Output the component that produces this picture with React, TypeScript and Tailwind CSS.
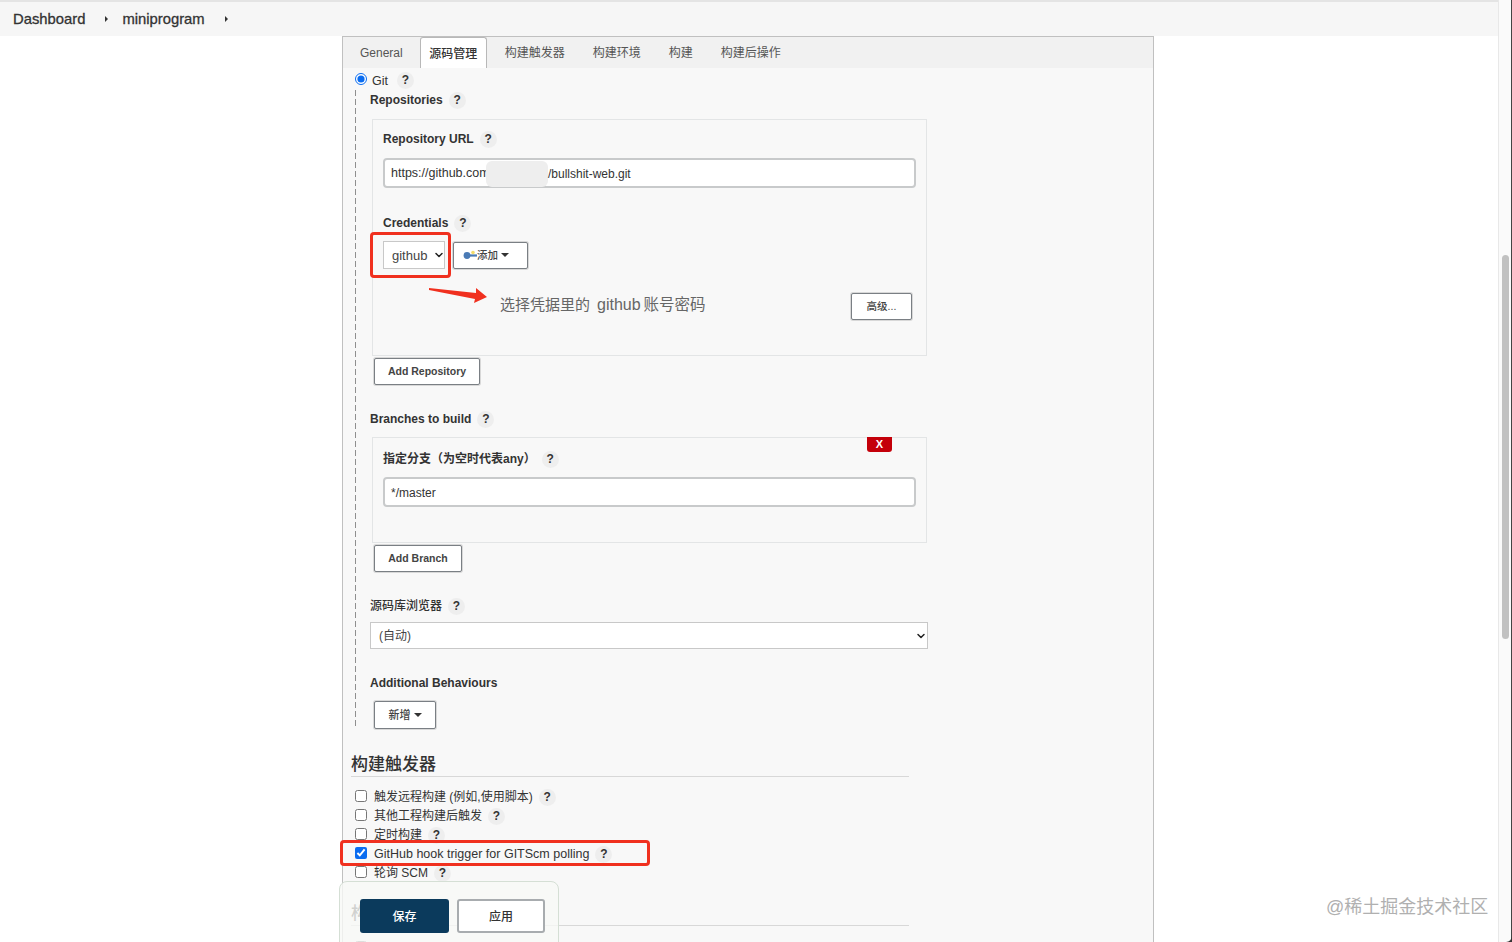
import { ChevronDown } from 'lucide-react';

const font = 'font-["Liberation_Sans","Noto_Sans_CJK_SC",sans-serif]';

function Help() {
  return (
    <span className="ml-[6px] flex h-[17px] w-[17px] shrink-0 items-center justify-center rounded-full bg-[#eeeeee] text-[12px] font-bold text-[#333]">
      ?
    </span>
  );
}

function Label({ text, weight = 'font-bold' }: { text: string; weight?: string }) {
  return (
    <div className={`flex h-[16px] items-center pt-[2px] text-[12px] text-[#333] ${weight}`}>
      {text}
      <Help />
    </div>
  );
}

function Caret() {
  return <span className="ml-[3px] inline-block h-0 w-0 border-x-[4px] border-t-[4px] border-x-transparent border-t-[#333]" />;
}

function JButton({ children, className = '' }: { children: React.ReactNode; className?: string }) {
  return (
    <button className={`flex h-[27px] items-center justify-center rounded-[2px] border border-[#7a7f84] bg-white text-[#444] shadow-[0_0_0_1px_#d8d8d8] ${className}`}>
      {children}
    </button>
  );
}

function TextBox({ children }: { children: React.ReactNode }) {
  return (
    <div className="flex h-[30px] w-[533px] items-center rounded-[4px] border-2 border-[#c8cacb] bg-white pl-[6px] pt-px text-[12px] text-[#333]">
      {children}
    </div>
  );
}

function TriggerRow({ text, checked = false, size = 'text-[12px]' }: { text: string; checked?: boolean; size?: string }) {
  return (
    <div className={`flex h-[19px] items-center pl-[12px] pt-px text-[#333] ${size}`}>
      <input type="checkbox" readOnly checked={checked} className="m-0 mb-[3px] h-[12px] w-[12px] accent-[#0a6cf0]" />
      <span className="ml-[7px]">{text}</span>
      <Help />
    </div>
  );
}

const tabs = ['构建触发器', '构建环境', '构建', '构建后操作'];

export default function App() {
  return (
    <div className={`relative flex h-[942px] w-[1512px] overflow-hidden bg-white ${font}`}>
      <div className="w-[1498px] shrink-0">
        <div className="flex h-[36px] items-center border-t-2 border-[#e4e4e4] bg-[#f6f6f6] pl-[13px] text-[14.8px] text-[#333] [-webkit-text-stroke:0.3px_#333]">
          <span>Dashboard</span>
          <span className="ml-[20px] h-0 w-0 border-y-[3.5px] border-l-[3.5px] border-y-transparent border-l-[#333]" />
          <span className="ml-[14px]">miniprogram</span>
          <span className="ml-[20px] h-0 w-0 border-y-[3.5px] border-l-[3.5px] border-y-transparent border-l-[#333]" />
        </div>

        <div className="ml-[342px] h-[906px] w-[812px] border-x border-t border-[#c0c0c0] bg-[#f8f8f8]">
          <div className="flex h-[31px] items-end bg-[#f1f1f1] pl-[17px] text-[12px] text-[#555]">
            <span className="flex h-[31px] items-center">General</span>
            <span className="ml-[17px] flex h-[31px] items-center rounded-t-[3px] border-x border-t border-[#b8b8b8] bg-white px-[8.5px] pt-[2px] font-medium text-[#333]">
              源码管理
            </span>
            <div className="ml-[4px] flex h-[31px] items-center">
              {tabs.map((tab) => (
                <span key={tab} className="px-[14px]">
                  {tab}
                </span>
              ))}
            </div>
          </div>

          <div className="box-content flex h-[16px] items-center pl-[12px] pt-[4px] text-[12.5px] text-[#333]">
            <input type="radio" readOnly checked className="m-0 mb-[2px] h-[12px] w-[12px] accent-[#0a6cf0]" />
            <span className="ml-[5px] pt-[2px]">Git</span>
            <span className="ml-[3px]">
              <Help />
            </span>
          </div>

          <div className="ml-[12px] mt-[2px] h-[639px] bg-[repeating-linear-gradient(to_bottom,#8f8f8f_0,#8f8f8f_6px,transparent_6px,transparent_9px)] bg-[length:1px_100%] bg-no-repeat pl-[15px] pt-px">
            <Label text="Repositories" />

            <div className="ml-[2px] mt-[12px] h-[237px] w-[555px] border border-[#e3e5e6] pl-[10px] pt-[10px]">
              <Label text="Repository URL" />
              <div className="mt-[12px]">
                <TextBox>
                  <span className="w-[95px] overflow-hidden whitespace-nowrap text-[12.5px]">https://github.com/</span>
                  <span className="h-[26px] w-[62px] rounded-[6px] bg-[#eeeeee]" />
                  <span>/bullshit-web.git</span>
                </TextBox>
              </div>
              <div className="mt-[26px]">
                <Label text="Credentials" />
              </div>
              <div className="mt-[11px] flex h-[28px] items-center">
                <div className="relative h-[28px] w-[62px]">
                  <select className="h-full w-full appearance-none border border-[#c8c8c8] bg-white pl-[8px] pt-px text-[13px] text-[#444]">
                    <option>github</option>
                  </select>
                  <ChevronDown size={12} strokeWidth={3} className="absolute right-0 top-[8px] text-[#222]" />
                </div>
                <JButton className="ml-[8px] w-[75px] !justify-start pl-[9px] text-[10.5px]">
                  <svg width="14" height="10" viewBox="0 0 14 10">
                    <circle cx="4" cy="5.5" r="3.4" fill="#4a7ab5" />
                    <rect x="6" y="4.4" width="8" height="2.2" fill="#4a7ab5" />
                    <circle cx="10" cy="2.5" r="1.8" fill="#f4dc6a" />
                  </svg>
                  <span className="pt-px font-medium">添加</span>
                  <Caret />
                </JButton>
              </div>
              <div className="mr-[14px] mt-[24px] flex justify-end">
                <JButton className="w-[61px] text-[10.5px] font-medium">高级...</JButton>
              </div>
            </div>
            <JButton className="ml-[4px] mt-[2px] w-[106px] text-[10.5px] font-bold">Add Repository</JButton>

            <div className="mt-[25px]">
              <Label text="Branches to build" />
            </div>
            <div className="relative ml-[2px] mt-[11px] h-[106px] w-[555px] border border-[#e3e5e6] pl-[10px] pt-[12px]">
              <span className="absolute left-[494px] top-[-1px] flex h-[15px] w-[25px] items-center justify-center rounded-b-[3px] bg-[#c4000a] text-[11px] font-bold text-white">
                X
              </span>
              <Label text="指定分支（为空时代表any）" />
              <div className="mt-[11px]">
                <TextBox>*/master</TextBox>
              </div>
            </div>
            <JButton className="ml-[4px] mt-[2px] w-[88px] text-[10.5px] font-bold">Add Branch</JButton>

            <div className="mt-[25px]">
              <Label text="源码库浏览器" weight="font-medium" />
            </div>
            <div className="relative mt-[9px] h-[27px] w-[558px]">
              <select className="h-full w-full appearance-none border border-[#c8c8c8] bg-white pl-[8px] text-[12px] text-[#444]">
                <option>(自动)</option>
              </select>
              <ChevronDown size={12} strokeWidth={3} className="absolute right-px top-[8px] text-[#222]" />
            </div>

            <div className="mt-[25px] flex h-[16px] items-center pt-[2px] text-[12px] font-bold text-[#333]">Additional Behaviours</div>
            <JButton className="ml-[4px] mt-[11px] h-[28px] w-[62px] text-[11px] font-medium">
              新增
              <Caret />
            </JButton>
          </div>

          <h2 className="ml-[8px] mt-[23px] h-[25px] w-[558px] border-b border-[#d8d8d8] text-[17px] font-medium leading-[26px] text-[#333]">
            构建触发器
          </h2>
          <div className="mt-[10px]">
            <TriggerRow text="触发远程构建 (例如,使用脚本)" />
            <TriggerRow text="其他工程构建后触发" />
            <TriggerRow text="定时构建" />
            <TriggerRow text="GitHub hook trigger for GITScm polling" checked size="text-[12.5px]" />
            <TriggerRow text="轮询 SCM" />
          </div>
          <h2 className="ml-[8px] mt-[19px] h-[25px] w-[558px] border-b border-[#d8d8d8] text-[17px] font-medium leading-[26px] text-[#333]">
            构建环境
          </h2>
          <div className="mt-[10px] pl-[12px]">
            <input type="checkbox" readOnly className="m-0 h-[12px] w-[12px]" />
          </div>
        </div>
      </div>

      <div className="relative w-[14px] shrink-0 border-l border-[#e8e8e8] bg-[#fafafa]">
        <div className="ml-[3px] mt-[255px] h-[384px] w-[7px] rounded-full bg-[#c1c1c1]" />
        <span className="absolute right-0 top-0 h-full w-px bg-[#444]" />
        <svg className="absolute bottom-0 right-0" width="6" height="6" viewBox="0 0 6 6">
          <path d="M6 0V6H0A6 6 0 0 0 6 0Z" fill="#333" />
        </svg>
      </div>

      {/* annotations drawn on top of the screenshot */}
      <span className="absolute left-[370px] top-[232px] h-[46px] w-[81px] rounded-[4px] border-[3px] border-[#f0301f]" />
      <span className="absolute left-[340px] top-[840px] h-[26px] w-[310px] rounded-[4px] border-[3px] border-[#f0301f]" />
      <svg className="absolute left-[428px] top-[285px]" width="60" height="20" viewBox="0 0 60 20">
        <polygon points="1,3 48,8 48,3 59,12 46,18 47,14 1,5" fill="#f0301f" />
      </svg>
      <span className="absolute left-[500px] top-[295px] text-[15px] leading-[20px] text-[#666]">
        选择凭据里的<span className="ml-[7px] mr-[3px] text-[16px]">github</span>
        <span className="text-[15.5px]">账号密码</span>
      </span>

      <div className="absolute left-[339px] top-[881px] flex h-[70px] w-[220px] gap-[8px] rounded-t-[8px] border border-[#d5dfd5] bg-[#f7f9f6]/80 pl-[20px] pt-[17px]">
        <button className="h-[34px] w-[89px] rounded-[3px] bg-[#0b3a5c] pt-px text-[12px] font-medium text-white">保存</button>
        <button className="h-[34px] w-[88px] rounded-[3px] border-2 border-[#a8acaf] bg-white pt-px text-[12px] font-medium text-[#333]">应用</button>
      </div>

      <span className="absolute left-[1326px] top-[896px] text-[18px] leading-[22px] text-[#b0b0b0]">@稀土掘金技术社区</span>
    </div>
  );
}
